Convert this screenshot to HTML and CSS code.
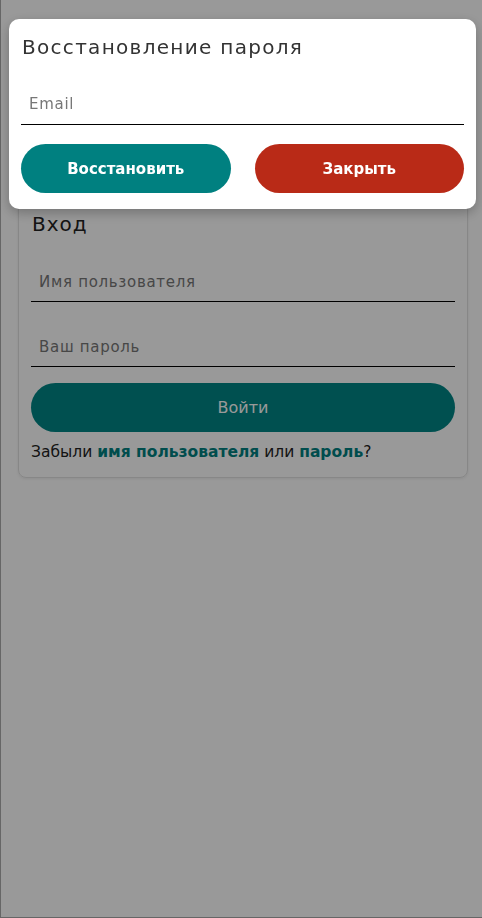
FILE: index.html
```html
<!DOCTYPE html>
<html lang="ru">
<head>
<meta charset="utf-8">
<title>Вход</title>
<link rel="stylesheet" href="styles.css">
</head>
<body>
<div class="page">
  <div class="login-card">
    <h2 class="card-title">Вход</h2>
    <div class="field"><input class="text-input" type="text" placeholder="Имя пользователя"></div>
    <div class="field"><input class="text-input" type="password" placeholder="Ваш пароль"></div>
    <button class="btn btn-login">Войти</button>
    <p class="forgot">Забыли <a href="#" class="link">имя пользователя</a> или <a href="#" class="link">пароль</a>?</p>
  </div>
</div>
<div class="overlay">
  <div class="modal">
    <h2 class="modal-title">Восстановление пароля</h2>
    <div class="field modal-field"><input class="text-input" type="email" placeholder="Email"></div>
    <div class="modal-actions">
      <button class="btn btn-restore">Восстановить</button>
      <button class="btn btn-close">Закрыть</button>
    </div>
  </div>
</div>
</body>
</html>
```
FILE: styles.css
```css
* { box-sizing: border-box; }
html, body { margin: 0; padding: 0; height: 100%; }
body {
  font-family: "DejaVu Sans", "Open Sans", sans-serif;
  background: #fff;
  color: #222;
}
.page {
  min-height: 918px;
  border-left: 1px solid #aaa;
  border-bottom: 1px solid #aaa;
  padding: 196px 14px 0 17px;
}
.login-card {
  border: 1px solid #e2e2e2;
  border-radius: 8px;
  box-shadow: 0 1px 3px rgba(0,0,0,0.08);
  padding: 12px 12px 13px 12px;
}
.card-title {
  margin: 0 0 14px 1px;
  font-size: 20px;
  font-weight: 400;
  line-height: 30px;
  letter-spacing: 1px;
  color: #222;
}
.field {
  border-bottom: 1px solid #000;
  margin-bottom: 16px;
}
.text-input {
  display: block;
  width: 100%;
  border: 0;
  outline: none;
  background: transparent;
  height: 48px;
  padding: 10px 8px 0 8px;
  font-family: inherit;
  font-size: 15px;
  letter-spacing: 0.7px;
  color: #333;
}
.text-input::placeholder { color: #777; }
.btn {
  display: block;
  border: 0;
  border-radius: 25px;
  height: 49px;
  font-family: inherit;
  color: #fff;
  cursor: pointer;
}
.btn-login {
  width: 100%;
  background: #008585;
  font-size: 16px;
  font-weight: 400;
}
.forgot {
  margin: 8px 0 0 0;
  font-size: 15.5px;
  line-height: 24px;
  color: #222;
}
.link {
  color: #008080;
  font-weight: 700;
  text-decoration: none;
}
.overlay {
  position: fixed;
  inset: 0;
  background: rgba(0,0,0,0.4);
}
.modal {
  position: absolute;
  top: 19px;
  left: 9px;
  width: 467px;
  background: #fff;
  border-radius: 10px;
  box-shadow: 0 4px 12px rgba(0,0,0,0.25);
  padding: 14px 12px 16px 12px;
}
.modal-title {
  margin: 0 0 12px 1px;
  font-size: 20px;
  font-weight: 400;
  line-height: 28px;
  letter-spacing: 1.3px;
  color: #333;
}
.modal-field { margin-bottom: 19px; }
.modal-field .text-input { height: 51px; }
.modal-actions {
  display: flex;
  gap: 24px;
}
.modal-actions .btn {
  flex: 1;
  font-size: 15px;
  font-weight: 700;
}
.btn-restore { background: #008080; }
.btn-close { background: #b92a17; }
```
